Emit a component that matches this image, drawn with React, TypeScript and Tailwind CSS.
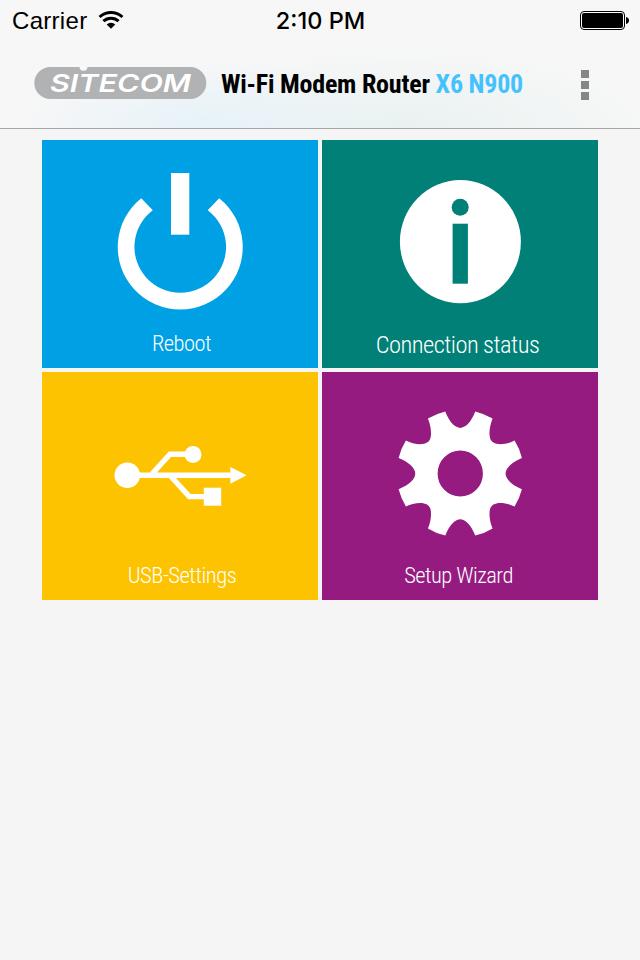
import type { ReactNode } from "react";

function StatusBar() {
  return (
    <div className="flex h-[41px] items-center pl-3 pr-[11px] text-black">
      <div className="flex flex-1 items-center gap-[11px]">
        <span className="font-['Liberation_Sans',sans-serif] text-[24px] leading-none tracking-[0.3px]">
          Carrier
        </span>
        <svg width="26" height="18" viewBox="0 0 26 18" fill="none" className="mb-0.5">
          <path
            d="M1.6 6a16.6 16.6 0 0 1 22.8 0M5.4 10.2a11 11 0 0 1 15.2 0"
            stroke="#000"
            strokeWidth="3"
          />
          <path d="M13 17.7 8.7 13.5a6.1 6.1 0 0 1 8.6 0z" fill="#000" />
        </svg>
      </div>
      <span className="pt-px font-['Inter',sans-serif] text-[23.5px] font-medium leading-none">
        2:10 PM
      </span>
      <div className="flex flex-1 justify-end">
        <svg width="49" height="20" viewBox="0 0 49 20">
          <rect x="0.5" y="0.5" width="44" height="18" rx="3.5" fill="#fff" stroke="#000" />
          <rect x="2" y="2" width="41" height="15" rx="2" />
          <path d="M46 6q3 .8 3 3.5T46 13z" />
        </svg>
      </div>
    </div>
  );
}

function Logo() {
  return (
    <svg width="173" height="34" viewBox="0 0 173 34" className="mb-0.5 shrink-0">
      <rect x="0.3" y="1" width="172" height="32" rx="16" fill="#b1b2b4" />
      <circle cx="49.5" cy="0.8" r="4" fill="#f8f9f9" />
      <text
        x="16"
        y="26"
        textLength="141"
        lengthAdjust="spacingAndGlyphs"
        className="font-['Inter',sans-serif] text-[24.5px] font-semibold italic"
        fill="#fff"
      >
        SITECOM
      </text>
    </svg>
  );
}

function Header() {
  return (
    <header className="h-[129px] border-b border-[#a7a7a7] bg-[#f7f7f7] bg-[radial-gradient(ellipse_190px_70px_at_205px_128px,#e6f2f9,transparent),radial-gradient(ellipse_260px_80px_at_400px_128px,#e9f2f1,transparent)]">
      <StatusBar />
      <div className="flex items-center pl-[34px] pt-6">
        <Logo />
        <h1 className="ml-3.5 mt-px w-[360px] shrink-0 whitespace-nowrap font-['Roboto_Condensed','Roboto',sans-serif] text-[26px] font-bold leading-9 tracking-[-0.22px] text-black font-stretch-condensed">
          Wi-Fi Modem Router <span className="text-[#45c2fd]">X6 N900</span>
        </h1>
        <button type="button" className="mt-0.5 flex shrink-0 flex-col gap-[3px]">
          <span className="size-2 bg-[#868686]" />
          <span className="size-2 bg-[#868686]" />
          <span className="size-2 bg-[#868686]" />
        </button>
      </div>
    </header>
  );
}

function Tile({
  label,
  color,
  labelClass,
  children,
}: Readonly<{
  label: string;
  color: string;
  labelClass: string;
  children: ReactNode;
}>) {
  return (
    <button type="button" className={`flex h-[228px] w-[276px] flex-col items-center ${color}`}>
      <svg width="276" height="188" viewBox="0 0 276 188" fill="#fff" className="shrink-0">
        {children}
      </svg>
      <span
        className={`whitespace-nowrap font-['Roboto_Condensed','Roboto',sans-serif] font-light leading-[30px] text-white font-stretch-condensed ${labelClass}`}
      >
        {label}
      </span>
    </button>
  );
}

export default function App() {
  return (
    <div className="h-[960px] w-[640px] overflow-hidden bg-[#f5f5f5]">
      <Header />
      <main className="grid grid-cols-[276px_276px] justify-center gap-1 pt-[11px]">
        <Tile
          label="Reboot"
          color="bg-[#00a0e4]"
          labelClass="pl-[3px] text-[22.5px] tracking-[-0.5px]"
        >
          <path d="M99.3 58.2A62.5 62.5 0 1 0 177.2 58.2L165.7 70.2A45.8 45.8 0 1 1 110.8 70.2z" />
          <rect x="129" y="33" width="18.3" height="61.7" />
        </Tile>
        <Tile
          label="Connection status"
          color="bg-[#008077]"
          labelClass="pr-[5px] pt-0.5 text-[24.5px] tracking-[-0.55px]"
        >
          <ellipse cx="138.4" cy="101.7" rx="60.5" ry="61.6" />
          <circle cx="138.2" cy="67.3" r="8.5" fill="#008077" />
          <rect x="130.6" y="83.7" width="15.3" height="60" fill="#008077" />
        </Tile>
        <Tile
          label="USB-Settings"
          color="bg-[#fdc300]"
          labelClass="pl-1 text-[22.5px] tracking-[-0.45px]"
        >
          <circle cx="85.3" cy="103.3" r="12.8" />
          <path d="M188.3 95 204.7 103.3 188.3 111.7z" />
          <path
            d="M85 103.3H189M109.7 102.3 128 82.3H146M128.6 104 147.3 124.6H163"
            fill="none"
            stroke="#fff"
            strokeWidth="5.4"
          />
          <circle cx="151" cy="82.6" r="8.5" />
          <rect x="161.8" y="115.7" width="17.4" height="18" />
        </Tile>
        <Tile
          label="Setup Wizard"
          color="bg-[#951b81]"
          labelClass="pr-[3px] text-[22.5px] tracking-[-0.55px]"
        >
          <g transform="translate(76.6 39.6) scale(.3333)">
            <path
              fillRule="evenodd"
              d="M140 0C153 34 171 49 185 49S217 34 230 0Q258 7 282 21C273 43 271 65 274 78C277 92 289 98 305 98C320 98 335 94 348 87Q363 111 370 139C336 153 321 172 321 186S336 219 370 233Q363 260 348 285C335 278 320 274 305 274C289 274 277 280 274 294C271 307 273 329 282 351Q258 366 230 372C217 338 199 323 185 323S153 338 140 372Q112 366 88 351C97 329 99 307 96 294C93 280 81 274 65 274C50 274 35 278 22 285Q7 260 0 233C35 219 50 201 50 186S35 153 0 139Q7 111 22 87C35 94 50 98 65 98C81 98 93 92 96 78C99 65 97 43 88 21Q112 7 140 0zM117 186a68 69 0 1 0 136 0a68 69 0 1 0-136 0z"
            />
          </g>
        </Tile>
      </main>
    </div>
  );
}
